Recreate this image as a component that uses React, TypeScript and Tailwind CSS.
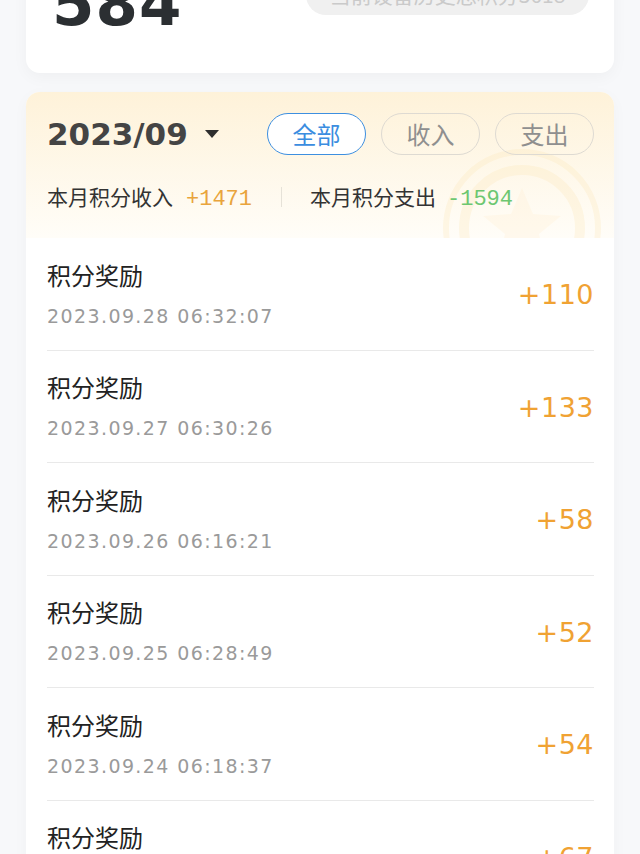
import React from 'react';

const records = [
  { time: '2023.09.28 06:32:07', amount: '+110' },
  { time: '2023.09.27 06:30:26', amount: '+133' },
  { time: '2023.09.26 06:16:21', amount: '+58' },
  { time: '2023.09.25 06:28:49', amount: '+52' },
  { time: '2023.09.24 06:18:37', amount: '+54' },
  { time: '2023.09.23 06:20:15', amount: '+67' },
];

const cjk = "font-['Noto_Sans_CJK_SC',sans-serif]";

const CoinMark: React.FC = () => (
  <svg
    className="absolute left-[416px] top-[56px] opacity-25"
    width="160"
    height="160"
    viewBox="0 0 160 160"
    fill="none"
  >
    <circle cx="80" cy="80" r="76" stroke="#fbe3b0" strokeWidth="6" />
    <circle cx="80" cy="80" r="58" stroke="#fbe3b0" strokeWidth="10" />
    <path
      d="M80 40 L91 66 L119 68 L97 86 L104 114 L80 99 L56 114 L63 86 L41 68 L69 66 Z"
      fill="#fdeccb"
    />
  </svg>
);

const Row: React.FC<{ time: string; amount: string }> = ({ time, amount }) => (
  <div className="ml-[21px] mr-[20px] h-[112.5px] border-b border-[#e9e9e9] flex items-center justify-between">
    <div className="flex flex-col">
      <div className={`${cjk} text-[24px] leading-[30px] text-[#222]`}>积分奖励</div>
      <div className="mt-[14px] font-['DejaVu_Sans',sans-serif] text-[19px] leading-[24px] tracking-[1.4px] text-[#9a9a9a]">
        {time}
      </div>
    </div>
    <div className="mt-[3px] font-['DejaVu_Sans',sans-serif] text-[27px] leading-[32px] tracking-[0.5px] text-[#f0a233]">
      {amount}
    </div>
  </div>
);

export default function App() {
  return (
    <div className="min-h-[854px] bg-[#f7f8fa] px-[26px] overflow-hidden">
      {/* Points summary (scrolled) */}
      <div className="-mt-[100px] h-[173px] rounded-[14px] bg-white shadow-[0_4px_16px_rgba(0,0,0,0.04)] flex items-start justify-between pl-[26px] pr-[25px] pt-[75px]">
        <div className="font-['DejaVu_Sans',sans-serif] font-bold text-[61px] leading-[60px] tracking-[1px] text-[#2b2f32] -mt-[1px]">
          584
        </div>
        <div className={`${cjk} h-[40px] w-[283px] rounded-full bg-[#f0f0f0] flex items-center justify-center text-[21px] text-[#cacaca]`}>
          当前设备历史总积分3618
        </div>
      </div>

      {/* Records */}
      <div className="mt-[19px] rounded-[14px] bg-white overflow-hidden shadow-[0_4px_16px_rgba(0,0,0,0.03)]">
        <div className="relative h-[146px] overflow-hidden bg-gradient-to-b from-[#fef2d9] to-[#fffdf8] pl-[21px] pr-[20px] pt-[21px]">
          <CoinMark />
          <div className="relative flex items-center">
            <div className="font-['DejaVu_Sans',sans-serif] font-bold text-[31px] leading-[42px] text-[#444]">
              2023/09
            </div>
            <svg className="ml-[17px]" width="14" height="8" viewBox="0 0 14 8">
              <path d="M0 0 H14 L7 8 Z" fill="#2e2e2e" />
            </svg>
            <div className="ml-auto flex gap-[15px]">
              <div className={`${cjk} h-[42px] w-[99px] rounded-full border-[1.5px] border-[#3d8fe0] bg-white flex items-center justify-center text-[24px] text-[#3b8de0]`}>
                全部
              </div>
              <div className={`${cjk} h-[42px] w-[99px] rounded-full border-[1.5px] border-[#dedad2] flex items-center justify-center text-[24px] text-[#8f8f8f]`}>
                收入
              </div>
              <div className={`${cjk} h-[42px] w-[99px] rounded-full border-[1.5px] border-[#dedad2] flex items-center justify-center text-[24px] text-[#8f8f8f]`}>
                支出
              </div>
            </div>
          </div>
          <div className="relative mt-[28px] flex items-center h-[28px]">
            <span className={`${cjk} text-[21px] text-[#333]`}>本月积分收入</span>
            <span className="ml-[13px] mt-[4px] font-['Liberation_Mono',monospace] text-[22px] text-[#e9a43c]">+1471</span>
            <span className="ml-[29px] h-[20px] w-px bg-[#e6e2d8]" />
            <span className={`ml-[28px] ${cjk} text-[21px] text-[#333]`}>本月积分支出</span>
            <span className="ml-[11px] mt-[4px] font-['Liberation_Mono',monospace] text-[22px] text-[#6dc771]">-1594</span>
          </div>
        </div>
        <div className="flex flex-col">
          {records.map((r) => (
            <Row key={r.time} time={r.time} amount={r.amount} />
          ))}
        </div>
      </div>
    </div>
  );
}
